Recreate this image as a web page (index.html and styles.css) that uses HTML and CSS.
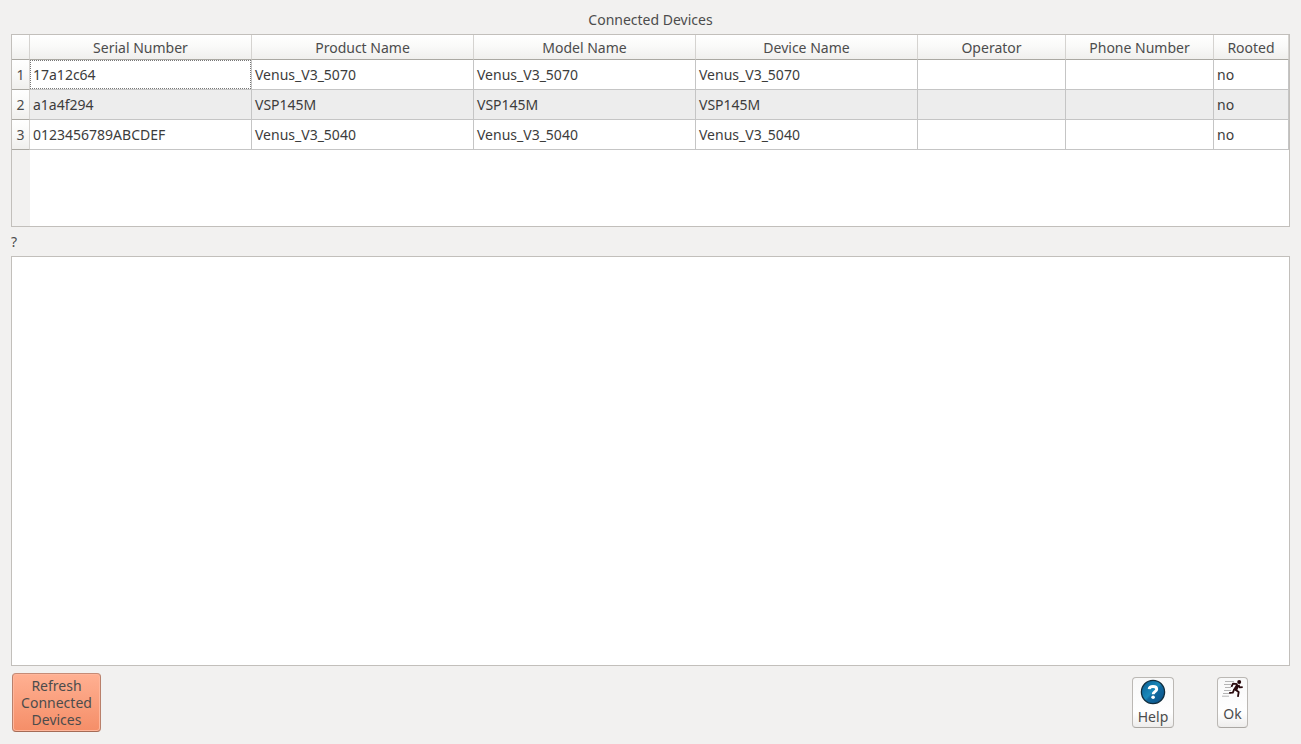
FILE: index.html
```html
<!DOCTYPE html>
<html lang="en">
<head>
<meta charset="utf-8">
<title>Connected Devices</title>
<link rel="stylesheet" href="styles.css">
</head>
<body>
<main class="window">
  <h1 class="title">Connected Devices</h1>
  <div class="table-frame">
    <table class="devices" aria-label="Connected Devices">
      <colgroup>
        <col class="col-index">
        <col class="col-name"><col class="col-name"><col class="col-name"><col class="col-name">
        <col class="col-phone"><col class="col-phone">
        <col>
      </colgroup>
      <thead>
        <tr><td class="corner"></td><th scope="col">Serial Number</th><th scope="col">Product Name</th><th scope="col">Model Name</th><th scope="col">Device Name</th><th scope="col">Operator</th><th scope="col">Phone Number</th><th scope="col">Rooted</th></tr>
      </thead>
      <tbody>
        <tr><th scope="row">1</th><td class="current">17a12c64</td><td>Venus_V3_5070</td><td>Venus_V3_5070</td><td>Venus_V3_5070</td><td></td><td></td><td>no</td></tr>
        <tr><th scope="row">2</th><td>a1a4f294</td><td>VSP145M</td><td>VSP145M</td><td>VSP145M</td><td></td><td></td><td>no</td></tr>
        <tr><th scope="row">3</th><td>0123456789ABCDEF</td><td>Venus_V3_5040</td><td>Venus_V3_5040</td><td>Venus_V3_5040</td><td></td><td></td><td>no</td></tr>
      </tbody>
    </table>
    <div class="index-gutter"></div>
  </div>
  <label class="status" for="output">?</label>
  <textarea class="output" id="output"></textarea>
  <footer class="actions">
    <button class="button refresh" type="button">Refresh<br>Connected<br>Devices</button>
    <button class="button help" type="button">
      <svg width="26" height="26" viewBox="0 0 26 26" aria-hidden="true">
        <defs>
          <linearGradient id="ball" x1="0" y1="0" x2="1" y2="1">
            <stop offset="0" stop-color="#075a90"/><stop offset=".48" stop-color="#1b8abb"/><stop offset=".55" stop-color="#10699f"/><stop offset="1" stop-color="#0a4f87"/>
          </linearGradient>
        </defs>
        <circle cx="13" cy="13" r="11.6" fill="url(#ball)" stroke="#102c3c" stroke-width="1.3"/>
        <path d="M9.2 10.2C9.4 8.2 11 7.4 13 7.4c2.2 0 3.7 1 3.7 2.9 0 2.3-3.5 2.4-3.5 4.9" fill="none" stroke="#fff" stroke-width="3"/>
        <circle cx="13.1" cy="18.3" r="1.8" fill="#fff"/>
      </svg>
      <span>Help</span>
    </button>
    <button class="button ok" type="button">
      <svg width="22" height="20" viewBox="0 0 22 20" aria-hidden="true">
        <path d="M3 2.5h9M2 5.5h7M3 8.5h6M2 11.5h7M1 14.5h8M0 17.2h7" stroke="#b5b5b5" stroke-width="1"/>
        <circle cx="17.2" cy="3.1" r="2" fill="#28080c"/>
        <path d="M14.8 4.5l-3.6 6 3.4 1.8 2.7-5.2z" fill="#28080c"/>
        <path d="M15.3 5.2L11 4.7 9.4 7.9M16.5 6l1.2 2.4 3-.3M12.3 10.2l-1.5 3.4-3.6.3M13.5 10.8l3.2 2.2-.8 4.8" fill="none" stroke="#28080c" stroke-width="1.8" stroke-linejoin="round"/>
      </svg>
      <span>Ok</span>
    </button>
  </footer>
</main>
</body>
</html>
```
FILE: styles.css
```css
* { box-sizing: border-box; }

body {
  margin: 0;
  background: #f2f1f0;
  color: #4c4c4c;
  font: 14px/17px "Noto Sans", "Open Sans", sans-serif;
}

.window {
  display: flex;
  flex-direction: column;
  min-height: 100vh;
  padding: 0 11px 12px;
}

.title {
  margin: 0;
  padding: 11px 0 6px;
  font-size: 14px;
  font-weight: 400;
  text-align: center;
}

.table-frame {
  display: flex;
  flex-direction: column;
  min-height: 193px;
  overflow: auto;
  border: 1px solid #c2bfbb;
  background: #fff;
}

.devices {
  width: 100%;
  table-layout: fixed;
  border-collapse: separate;
  border-spacing: 0;
  color: #3c3c3c;
}

.col-index { width: 18px; }
.col-name { width: 222px; }
.col-phone { width: 148px; }

.devices th,
.devices td {
  height: 30px;
  padding: 0 3px;
  border-right: 1px solid #c5c5c5;
  border-bottom: 1px solid #c5c5c5;
  text-align: left;
}

.devices tbody tr:nth-child(even) td { background: #ededed; }

.devices th,
.devices .corner {
  padding: 0;
  border-right-color: #d5d3d0;
  border-bottom-color: #aaa8a2;
  background: linear-gradient(#fff, #f9f9f8 50%, #f0efed);
  color: #4c4c4c;
  font-weight: 400;
  text-align: center;
}

.devices thead th,
.devices .corner { height: 25px; }

.devices .current { position: relative; }

/* Keyboard focus marker, drawn inside the grid lines */
.devices .current::after {
  position: absolute;
  inset: 0;
  border: 1px dotted #777;
  content: "";
}

.index-gutter {
  flex: 1;
  width: 18px;
  background: #f2f1f0;
}

.status { padding: 6px 0; }

.output {
  flex: 1;
  width: 100%;
  min-height: 80px;
  padding: 4px;
  border: 1px solid #c2bfbb;
  outline: 0;
  background: #fff;
  color: #3c3c3c;
  font: inherit;
  resize: none;
}

.actions {
  display: flex;
  align-items: center;
  padding: 7px 42px 0 1px;
}

.button {
  display: flex;
  flex-direction: column;
  align-items: center;
  padding: 1px 0 2px;
  border: 1px solid #bbb8b4;
  border-bottom-color: #aaa7a3;
  border-radius: 4px;
  background: linear-gradient(#f8f8f8, #fff 70%, #eeedec);
  color: #4c4c4c;
  font: inherit;
}

.refresh {
  display: block;
  width: 89px;
  height: 59px;
  margin-right: auto;
  border-color: #c58b76 #b9806b #a56b56;
  background: linear-gradient(#ffb092, #f58e68);
  box-shadow: inset 0 0 0 1px #ffb69b;
  text-align: center;
}

.help {
  width: 42px;
  height: 51px;
  margin-right: 43px;
  gap: 3px;
}

.ok {
  width: 31px;
  height: 51px;
  gap: 6px;
}
```
